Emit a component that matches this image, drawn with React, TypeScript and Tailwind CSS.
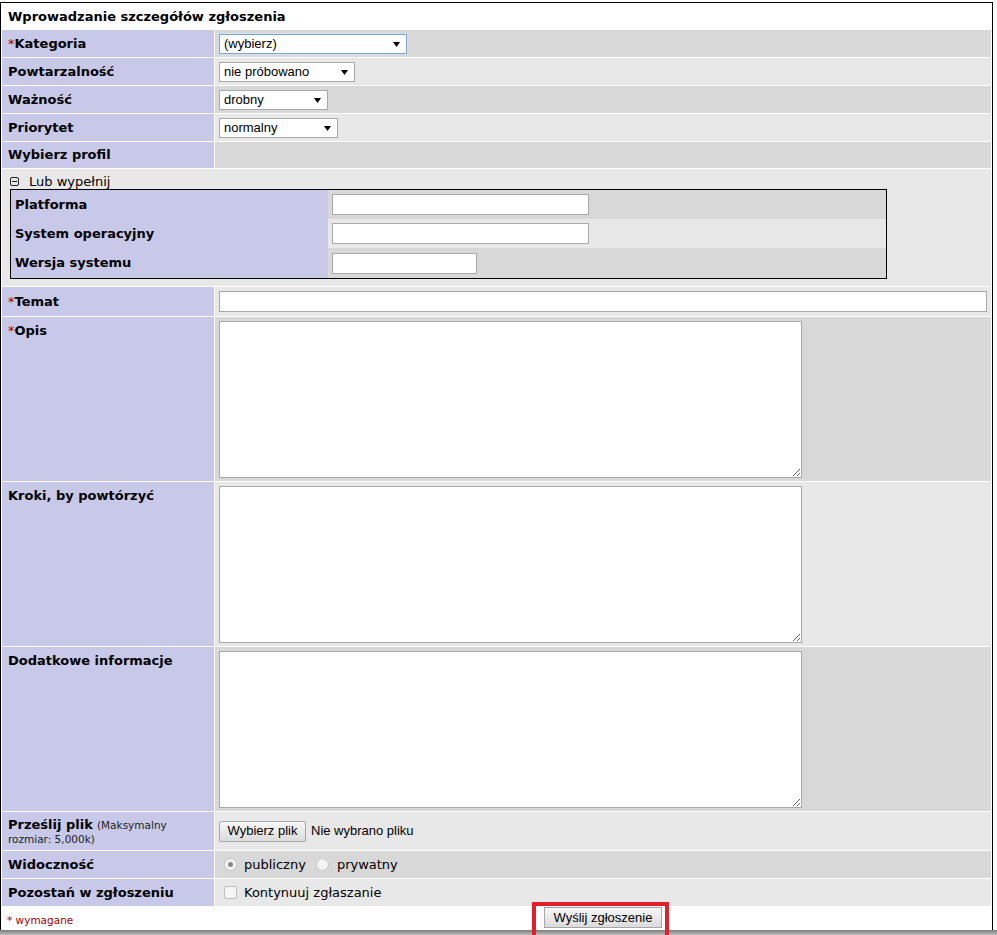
import React from 'react';

const ARIAL = "font-['Liberation_Sans',Arial,sans-serif]";

const Req = () => <span className="font-normal text-[#aa0000]">*</span>;

const Arrow = () => (
    <svg className="absolute right-[7px] top-[8px] pointer-events-none" width="7" height="5" viewBox="0 0 7 5">
        <polygon points="0,0 7,0 3.5,5" fill="#000" />
    </svg>
);

const Select = ({ width, value, focused = false }: { width: string; value: string; focused?: boolean }) => (
    <div className={`relative h-[20px] ${width}`}>
        <select
            defaultValue={value}
            className={`h-full w-full appearance-none bg-white pl-[4px] text-[13px] text-black outline-none ${ARIAL} ${
                focused ? 'border border-[#7fa4d8] shadow-[0_0_0_1px_#d4e1f3]' : 'border border-[#a9a9a9]'
            }`}
        >
            <option>{value}</option>
        </select>
        <Arrow />
    </div>
);

const TextInput = ({ width }: { width: string }) => (
    <input type="text" className={`h-[21px] border border-[#a9a9a9] bg-white px-[2px] outline-none ${width}`} />
);

const Area = () => (
    <textarea className="block h-[157px] w-[583px] border border-[#a9a9a9] bg-white outline-none" />
);

const Radio = ({ checked }: { checked?: boolean }) => (
    <span className="ml-[5px] mr-[3px] flex h-[13px] w-[13px] items-center justify-center rounded-full border border-[#c6c6c6] bg-[#f3f3f3]">
        {checked && <span className="h-[5px] w-[5px] rounded-full bg-[#8a8a8a]" />}
    </span>
);

export default function App() {
    const label = 'bg-[#c8c8e8] font-bold pl-[6px] flex items-center';
    const labelTop = 'bg-[#c8c8e8] font-bold pl-[6px] pt-[6px]';
    const dark = 'bg-[#d8d8d8] pl-[4px] flex items-center';
    const light = 'bg-[#e8e8e8] pl-[4px] flex items-center';

    return (
        <div className="min-h-screen bg-white pt-[2px] font-['DejaVu_Sans',Verdana,sans-serif] text-[13px] leading-[16px] text-black">
            <div className="grid w-[993px] grid-cols-[212px_776px] gap-px border border-black bg-white p-px">
                {/* header */}
                <div className="col-span-2 flex h-[25px] items-center bg-white pl-[6px] font-bold">
                    Wprowadzanie szczegółów zgłoszenia
                </div>

                <div className={`${label} h-[27px]`}>
                    <Req />Kategoria
                </div>
                <div className={dark}>
                    <Select width="w-[188px]" value="(wybierz)" focused />
                </div>

                <div className={`${label} h-[27px]`}>Powtarzalność</div>
                <div className={light}>
                    <Select width="w-[136px]" value="nie próbowano" />
                </div>

                <div className={`${label} h-[27px]`}>Ważność</div>
                <div className={dark}>
                    <Select width="w-[109px]" value="drobny" />
                </div>

                <div className={`${label} h-[27px]`}>Priorytet</div>
                <div className={light}>
                    <Select width="w-[119px]" value="normalny" />
                </div>

                <div className={`${label} h-[26px]`}>Wybierz profil</div>
                <div className="bg-[#d8d8d8]" />

                {/* Lub wypelnij */}
                <div className="col-span-2 h-[117px] bg-[#e8e8e8] pl-[8px] pt-[4px]">
                    <div className="flex h-[16px] items-center gap-[10px] pt-px">
                        <svg width="9" height="9" viewBox="0 0 9 9">
                            <rect x="0.5" y="0.5" width="8" height="8" rx="1.5" fill="none" stroke="#222" />
                            <line x1="2" y1="4.5" x2="7" y2="4.5" stroke="#222" />
                        </svg>
                        <span>Lub wypełnij</span>
                    </div>
                    <div className="grid w-[877px] grid-cols-[317px_1fr] border border-black">
                        <div className="flex h-[29px] items-center bg-[#c8c8e8] pl-[4px] font-bold">Platforma</div>
                        <div className="flex items-center bg-[#d8d8d8] pl-[4px]">
                            <TextInput width="w-[257px]" />
                        </div>
                        <div className="flex h-[29px] items-center bg-[#c8c8e8] pl-[4px] font-bold">System operacyjny</div>
                        <div className="flex items-center bg-[#e8e8e8] pl-[4px]">
                            <TextInput width="w-[257px]" />
                        </div>
                        <div className="flex h-[30px] items-center bg-[#c8c8e8] pl-[4px] font-bold">Wersja systemu</div>
                        <div className="flex items-center bg-[#d8d8d8] pl-[4px]">
                            <TextInput width="w-[145px]" />
                        </div>
                    </div>
                </div>

                <div className={`${label} h-[29px]`}>
                    <Req />Temat
                </div>
                <div className={`${light} pr-[4px]`}>
                    <TextInput width="w-full" />
                </div>

                <div className={`${labelTop} h-[164px]`}>
                    <Req />Opis
                </div>
                <div className={dark}>
                    <Area />
                </div>

                <div className={`${labelTop} h-[164px]`}>Kroki, by powtórzyć</div>
                <div className={light}>
                    <Area />
                </div>

                <div className={`${labelTop} h-[164px]`}>Dodatkowe informacje</div>
                <div className={dark}>
                    <Area />
                </div>

                <div className="h-[38px] bg-[#c8c8e8] pl-[6px] pt-[5px]">
                    <div className="leading-[16px]">
                        <span className="font-bold">Prześlij plik</span>{' '}
                        <span className="text-[10.5px] text-[#222]">(Maksymalny</span>
                    </div>
                    <div className="text-[10.5px] leading-[13px] text-[#222]">rozmiar: 5,000k)</div>
                </div>
                <div className={`${light} gap-[5px] ${ARIAL}`}>
                    <button
                        type="button"
                        className="h-[21px] w-[87px] rounded-[2px] border border-[#a6a6a6] bg-gradient-to-b from-[#f7f7f7] to-[#dcdcdc] text-[13px] text-black"
                    >
                        Wybierz plik
                    </button>
                    <span>Nie wybrano pliku</span>
                </div>

                <div className={`${label} h-[27px]`}>Widoczność</div>
                <div className={dark}>
                    <Radio checked />
                    <span className="ml-[4px]">publiczny</span>
                    <span className="ml-[5px]" />
                    <Radio />
                    <span className="ml-[5px]">prywatny</span>
                </div>

                <div className={`${label} h-[27px]`}>Pozostań w zgłoszeniu</div>
                <div className={light}>
                    <span className="ml-[5px] mr-[3px] h-[13px] w-[13px] rounded-[2px] border border-[#bdbdbd] bg-[#f5f5f5]" />
                    <span className="ml-[4px]">Kontynuuj zgłaszanie</span>
                </div>

                {/* footer */}
                <div className="h-[28px] bg-white pl-[5px] pt-[7px] text-[10.5px] leading-[13px] text-[#aa0000]">* wymagane</div>
                <div className="flex items-start justify-center bg-white">
                    <div className="relative">
                        <button
                            type="button"
                            className={`h-[21px] w-[118px] border border-[#a6a6a6] bg-gradient-to-b from-[#f7f7f7] to-[#dcdcdc] text-[13px] text-black ${ARIAL}`}
                        >
                            Wyślij zgłoszenie
                        </button>
                        <div className="pointer-events-none absolute -top-[5px] -bottom-[20px] -left-[12px] -right-[7px] z-10 border-4 border-[#e3202a]" />
                    </div>
                </div>
            </div>
            <div className="fixed bottom-0 left-0 right-0 h-[5px] bg-gradient-to-b from-[#7c7c7c] to-[#bdbdbd]" />
        </div>
    );
}
